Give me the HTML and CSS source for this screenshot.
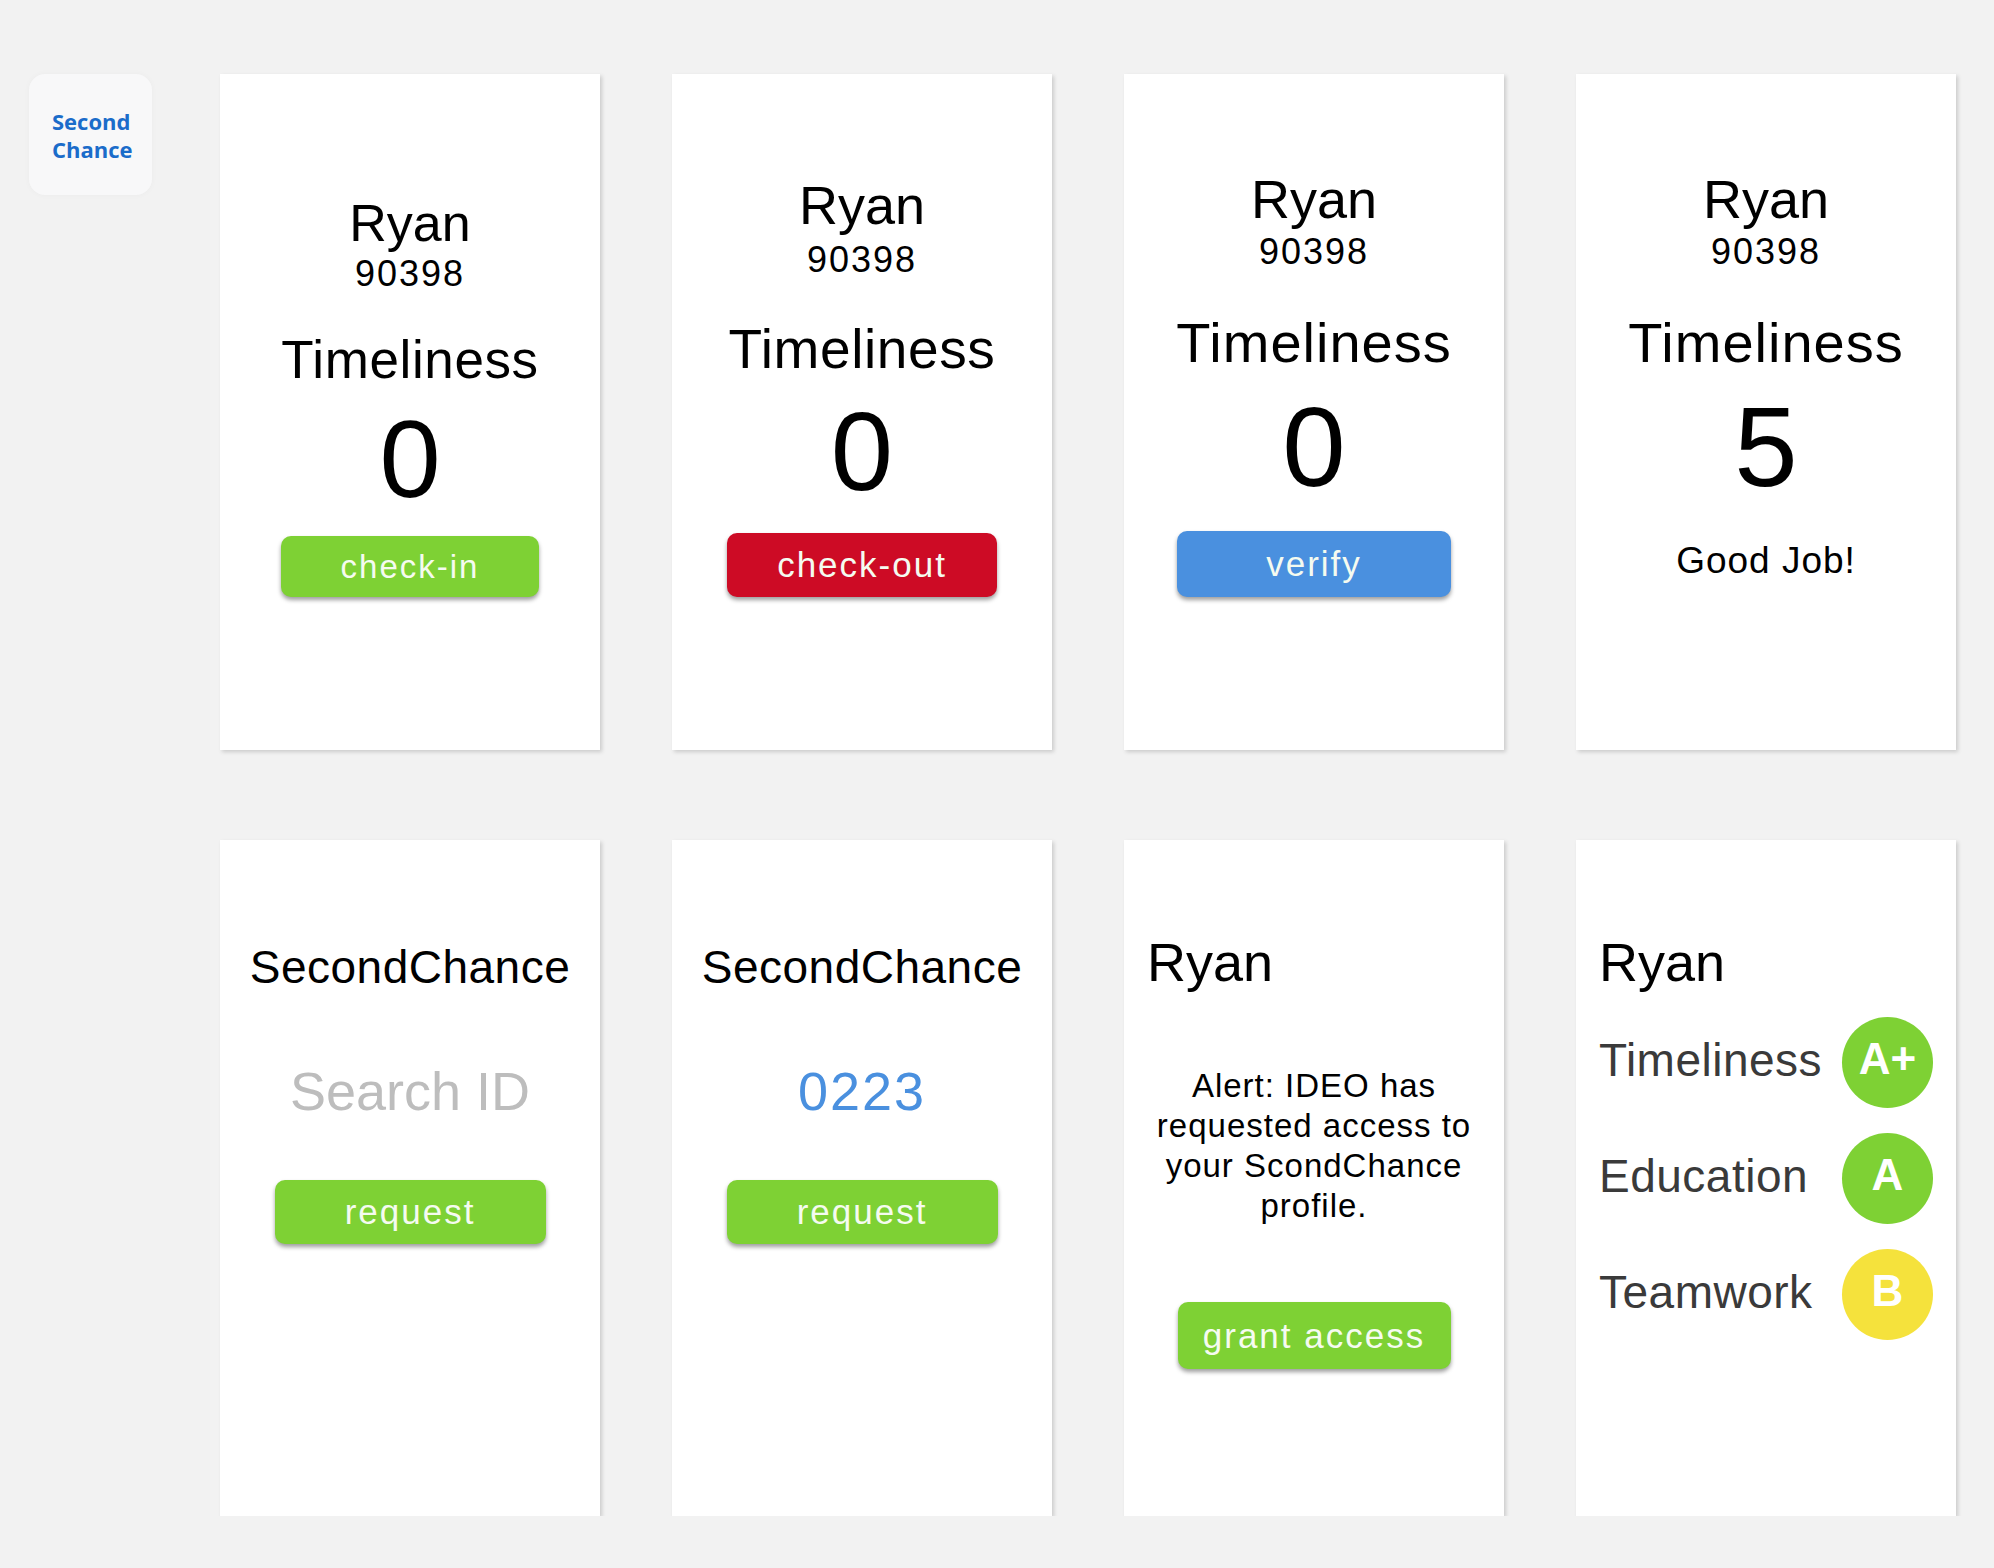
FILE: index.html
```html
<!DOCTYPE html>
<html lang="en">
<head>
    <meta charset="UTF-8">
    <title>SecondChance screens</title>
    <link rel="stylesheet" href="styles.css">
</head>

<body>
    <div class="page">
        <div class="logo">
            <span>Second</span>
            <span>Chance</span>
        </div>

        <div class="grid">
            <!-- row 1: timeliness flow -->
            <div class="card card-a">
                <div class="name">Ryan</div>
                <div class="id">90398</div>
                <div class="metric">Timeliness</div>
                <div class="score">0</div>
                <div class="btn green">check-in</div>
            </div>

            <div class="card card-b">
                <div class="name">Ryan</div>
                <div class="id">90398</div>
                <div class="metric">Timeliness</div>
                <div class="score">0</div>
                <div class="btn red">check-out</div>
            </div>

            <div class="card">
                <div class="name">Ryan</div>
                <div class="id">90398</div>
                <div class="metric">Timeliness</div>
                <div class="score">0</div>
                <div class="btn blue">verify</div>
            </div>

            <div class="card">
                <div class="name">Ryan</div>
                <div class="id">90398</div>
                <div class="metric">Timeliness</div>
                <div class="score">5</div>
                <div class="note">Good Job!</div>
            </div>

            <!-- row 2: employer search / profile -->
            <div class="card card-search">
                <div class="title">SecondChance</div>
                <div class="field">Search ID</div>
                <div class="btn green">request</div>
            </div>

            <div class="card card-search">
                <div class="title">SecondChance</div>
                <div class="field filled">0223</div>
                <div class="btn green">request</div>
            </div>

            <div class="card card-alert">
                <div class="name">Ryan</div>
                <div class="alert">Alert: IDEO has<br>requested access to<br>your ScondChance<br>profile.</div>
                <div class="btn green">grant access</div>
            </div>

            <div class="card card-grades">
                <div class="name">Ryan</div>
                <div class="grades">
                    <div class="grade">
                        <span class="grade-label">Timeliness</span>
                        <span class="badge badge-a">A+</span>
                    </div>
                    <div class="grade">
                        <span class="grade-label">Education</span>
                        <span class="badge badge-a">A</span>
                    </div>
                    <div class="grade">
                        <span class="grade-label">Teamwork</span>
                        <span class="badge badge-b">B</span>
                    </div>
                </div>
            </div>
        </div>
    </div>
</body>

</html>
```

FILE: styles.css
```css
* {
    box-sizing: border-box;
}

body {
    margin: 0;
    background: #f2f2f2;
    font-family: "Liberation Sans", Arial, sans-serif;
    color: #000;
}

.page {
    display: flex;
    align-items: flex-start;
    gap: 68px;
    padding: 74px 0 0 29px;
}

.logo {
    width: 123px;
    height: 121px;
    border-radius: 16px;
    background: #f8f8f9;
    box-shadow: 0 0 6px rgba(0, 0, 0, 0.03);
    display: flex;
    flex-direction: column;
    justify-content: center;
    padding-left: 23px;
    font-family: "Open Sans", sans-serif;
    font-weight: 700;
    font-size: 22px;
    line-height: 28px;
    color: #1b6cca;
}

.grid {
    display: grid;
    grid-template-columns: repeat(4, 380px);
    grid-auto-rows: 676px;
    gap: 90px 72px;
}

.card {
    background: #fff;
    box-shadow: 2px 2px 4px rgba(0, 0, 0, 0.16);
    display: flex;
    flex-direction: column;
    align-items: center;
    padding-top: 98px;
}

.name {
    font-size: 54px;
    line-height: 1;
}

.id {
    font-size: 36px;
    line-height: 1;
    letter-spacing: 2px;
    margin-top: 8px;
}

.metric {
    font-size: 56px;
    line-height: 1;
    letter-spacing: 1px;
    margin-top: 45px;
}

.score {
    font-size: 114px;
    line-height: 1;
    margin-top: 19px;
}

.note {
    font-size: 37px;
    line-height: 1;
    letter-spacing: 1px;
    margin-top: 38px;
}

.btn {
    margin-top: 27px;
    width: 274px;
    height: 66px;
    line-height: 66px;
    border-radius: 10px;
    color: #f5fbf0;
    font-size: 35px;
    letter-spacing: 2px;
    text-align: center;
    box-shadow: 0 3px 4px rgba(0, 0, 0, 0.38);
}

.green {
    background: #7ed134;
}

.red {
    background: #cd0b25;
}

.blue {
    background: #4a90df;
}

/* first two shots were taken at a slightly different scale */
.card-a {
    padding-top: 123px;
}

.card-a .name {
    font-size: 52px;
}

.card-a .id {
    margin-top: 7px;
}

.card-a .metric {
    font-size: 53px;
    letter-spacing: 0.6px;
    margin-top: 41px;
}

.card-a .score {
    font-size: 110px;
    margin-top: 18px;
}

.card-a .btn {
    width: 258px;
    height: 61px;
    line-height: 61px;
    font-size: 33px;
    margin-top: 22px;
}

.card-b {
    padding-top: 104px;
}

.card-b .id {
    margin-top: 10px;
}

.card-b .metric {
    font-size: 55px;
    letter-spacing: 0.6px;
    margin-top: 44px;
}

.card-b .score {
    font-size: 112px;
}

.card-b .btn {
    width: 270px;
    height: 64px;
    line-height: 64px;
    margin-top: 25px;
}

/* search screens */
.card-search {
    padding-top: 104px;
}

.title {
    font-size: 46px;
    line-height: 1;
    letter-spacing: 0.5px;
}

.field {
    font-size: 54px;
    line-height: 1;
    margin-top: 74px;
    color: #bdbdbd;
}

.field.filled {
    color: #4a90df;
    letter-spacing: 2px;
}

.card-search .btn {
    width: 271px;
    height: 64px;
    line-height: 64px;
    margin-top: 62px;
}

/* alert screen */
.card-alert {
    padding: 95px 23px 0;
}

.card-alert .name {
    align-self: flex-start;
}

.alert {
    margin-top: 77px;
    font-size: 33px;
    line-height: 40px;
    letter-spacing: 1px;
    text-align: center;
}

.card-alert .btn {
    width: 273px;
    height: 67px;
    line-height: 67px;
    margin-top: 76px;
}

/* grades screen */
.card-grades {
    align-items: stretch;
    padding: 95px 23px 0;
}

.grades {
    margin-top: 28px;
    display: flex;
    flex-direction: column;
    gap: 25px;
}

.grade {
    display: flex;
    align-items: center;
    justify-content: space-between;
}

.grade-label {
    font-size: 46px;
    line-height: 1;
    letter-spacing: 0.5px;
    color: #3a3a3a;
    padding-bottom: 6px;
}

.badge {
    width: 91px;
    height: 91px;
    border-radius: 50%;
    display: flex;
    align-items: center;
    justify-content: center;
    padding-bottom: 8px;
    color: #fff;
    font-weight: bold;
    font-size: 44px;
    line-height: 1;
}

.badge-a {
    background: #7ed134;
}

.badge-b {
    background: #f5e23c;
}
```
